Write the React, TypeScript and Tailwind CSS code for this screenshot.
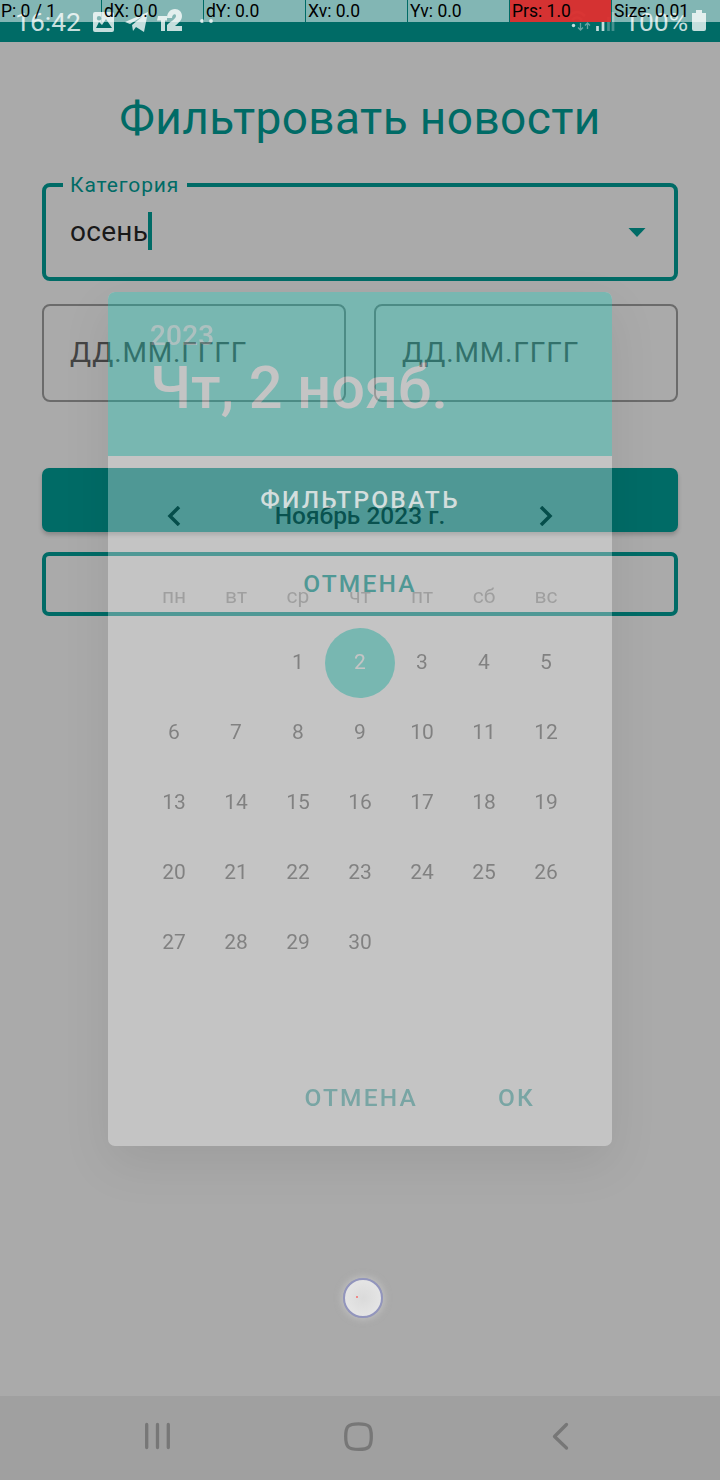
const WEEKDAYS = ['пн', 'вт', 'ср', 'чт', 'пт', 'сб', 'вс'];
const DAYS: (number | null)[] = [null, null, ...Array.from({ length: 30 }, (_, i) => i + 1)];

function PointerCell({ text, className }: { text: string; className: string }) {
  return (
    <div className={`h-[22px] shrink-0 overflow-hidden whitespace-nowrap pl-[2px] text-[17.5px] leading-[22px] text-black ${className}`}>
      {text}
    </div>
  );
}

function PointerBar() {
  return (
    <div className="absolute inset-x-0 top-0 z-30 flex gap-px">
      <PointerCell text="P: 0 / 1" className="w-[101px] bg-white/51 pl-px" />
      <PointerCell text="dX: 0.0" className="w-[101px] bg-white/51" />
      <PointerCell text="dY: 0.0" className="w-[101px] bg-white/51" />
      <PointerCell text="Xv: 0.0" className="w-[101px] bg-white/51" />
      <PointerCell text="Yv: 0.0" className="w-[101px] bg-white/51" />
      <PointerCell text="Prs: 1.0" className="w-[101px] bg-[#e22f2f]/94" />
      <PointerCell text="Size: 0.01" className="w-[108px] bg-white/51" />
    </div>
  );
}

function StatusBar() {
  return (
    <header className="flex h-[42px] shrink-0 items-start justify-between bg-[#006b66] text-[#c5dedd]">
      <div className="flex pl-[15px] pt-[6px]">
        <span className="w-[77px] text-[26.5px] leading-[32px]">16:42</span>
        <svg className="h-[28px] w-[126px]" viewBox="92 6 126 28" fill="currentColor">
          <path fillRule="evenodd" d="M95 12h17a2 2 0 0 1 2 2v16a2 2 0 0 1-2 2H95a2 2 0 0 1-2-2V14a2 2 0 0 1 2-2Zm1 16h16l-6-9-4 6-3-3Zm3-12a2.2 2.2 0 1 0 0 4.400 2.200 2.200 0 0 0 0-4.400Z" />
          <path d="m125 22 23-10-4 20-8-5-3 4-1-6 11-9-13 8Z" />
          <path d="M158 16h9v4.500h-2V31h-4V20.500h-4Z" />
          <path d="M167 18c0-5 3-9 8-9 4 0 7 3 7 7 0 5-4 7-7 10h7v5h-15v-6c4-4 9-6 9-9 0-3-4-2-4 2Z" />
          <circle cx="202" cy="21" r="1.900" />
          <circle cx="211" cy="21" r="1.900" />
        </svg>
      </div>
      <div className="flex pt-[6px]">
        <svg className="h-[28px] w-[58px]" viewBox="566 6 58 28" fill="none" stroke="currentColor">
          <g strokeWidth="2.500" opacity=".35">
            <path d="M569 16q8-8 16 0" />
            <path d="M572 20q5-5 10 0" />
          </g>
          <circle cx="573.500" cy="25.500" r="1.700" fill="currentColor" stroke="none" />
          <g strokeWidth="1.300" opacity=".5">
            <path d="M580.500 23v7m-2.500-2.500 2.500 2.500 2.500-2.500M587.500 29v-6m-2.500 2.500 2.500-2.500 2.500 2.500" />
          </g>
          <path strokeWidth="2.700" d="M597.500 31v-5M603 31v-9" />
          <path strokeWidth="2.700" opacity=".35" d="M608.500 31V17M613 31V12" />
        </svg>
        <span className="w-[68px] text-[26.5px] leading-[32px]">100%</span>
        <svg className="h-[28px] w-[28px]" viewBox="692 6 28 28" fill="currentColor">
          <path d="M696 10h6v3h4v16q0 2-2 2h-10q-2 0-2-2V13h4Z" />
        </svg>
      </div>
    </header>
  );
}

function DateField() {
  return (
    <div className="flex h-[98px] flex-1 items-center rounded-[8px] border-2 border-[#6b6b6b] pl-[26px] text-[28px] tracking-[0.875px] text-[#444]">
      ДД.ММ.ГГГГ
    </div>
  );
}

function FilterForm() {
  return (
    <main className="flex h-[1354px] shrink-0 flex-col px-[42px]">
      <h1 className="mt-[48px] text-center text-[46px] leading-[56px] tracking-[0.4px] whitespace-nowrap text-[#006b66]">Фильтровать новости</h1>
      <div className="relative mt-[37px] flex h-[98px] shrink-0 items-center justify-between rounded-[8px] border-4 border-[#006b66] pr-[28px] pl-[24px]">
        <span className="absolute -top-[14px] left-[17px] bg-[#aaa] pr-[8px] pl-[7px] text-[21px] leading-[25px] tracking-[0.9px] text-[#006b66]">Категория</span>
        <span className="flex items-center text-[28px] tracking-[0.3px] text-[#191919]">
          осень
          <span className="-mt-[3px] h-[38px] w-[4px] bg-[#006b66]" />
        </span>
        <svg className="h-[9px] w-[18px]" viewBox="0 0 18 9"><path d="M.5 0h17L9 9Z" fill="#006b66" /></svg>
      </div>
      <div className="mt-[23px] flex gap-[28px]">
        <DateField />
        <DateField />
      </div>
      <button className="mt-[66px] h-[64px] shrink-0 rounded-[7px] bg-[#006b66] text-[24.5px] font-medium tracking-[2.19px] text-[#c0cfce] shadow-[0_3px_4px_rgba(0,0,0,0.2)]">ФИЛЬТРОВАТЬ</button>
      <button className="mt-[20px] h-[64px] shrink-0 rounded-[7px] border-4 border-[#006b66] text-[24.5px] font-medium tracking-[2.19px] text-[#006b66]">ОТМЕНА</button>
    </main>
  );
}

function DatePicker() {
  return (
    <section className="absolute top-[292px] left-[108px] z-10 flex h-[854px] w-[504px] flex-col overflow-hidden rounded-[7px] bg-white opacity-[0.31]">
      <div className="flex h-[164px] shrink-0 flex-col bg-[#0ad5c3] pt-[27px] pl-[42px] font-medium text-white">
        <span className="text-[28px] leading-[34px] tracking-[0.2px] opacity-70">2023</span>
        <span className="text-[59.5px] leading-[70px] whitespace-nowrap">Чт, 2 нояб.</span>
      </div>
      <div className="mt-[25px] flex h-[70px] shrink-0 items-center justify-between px-[59px]">
        <svg className="h-[20px] w-[14px]" viewBox="0 0 14 20" fill="none" stroke="#111" strokeWidth="3.500"><path d="m12 1-9 9 9 9" /></svg>
        <span className="text-[24.5px] font-medium text-black/90">Ноябрь 2023 г.</span>
        <svg className="h-[20px] w-[14px]" viewBox="0 0 14 20" fill="none" stroke="#111" strokeWidth="3.500"><path d="m2 1 9 9-9 9" /></svg>
      </div>
      <div className="mt-[19px] grid shrink-0 grid-cols-7 px-[35px] text-center text-[21px] leading-[52px] text-[#898989]">
        {WEEKDAYS.map((day) => <span key={day}>{day}</span>)}
      </div>
      <div className="mt-[6px] grid shrink-0 grid-cols-7 px-[35px] text-[21px] text-[#292929]">
        {DAYS.map((day, i) => (
          <div key={i} className="flex h-[70px] items-center justify-center">
            {day === 2 ? (
              <span className="flex size-[70px] shrink-0 items-center justify-center rounded-full bg-[#0ad5c3] text-white">{day}</span>
            ) : day}
          </div>
        ))}
      </div>
      <div className="mt-auto flex h-[97px] shrink-0 items-start justify-end gap-[80px] pt-[34px] pr-[77px] text-[24.5px] leading-[30px] font-medium tracking-[2.19px] text-[#0e9c97]">
        <button>ОТМЕНА</button>
        <button>ОК</button>
      </div>
    </section>
  );
}

function NavigationBar() {
  return (
    <nav className="h-[84px] shrink-0 bg-[#a0a0a0]">
      <svg className="h-[84px] w-[720px]" viewBox="0 0 720 84" fill="none" stroke="#777" strokeWidth="3.300" strokeLinecap="round" strokeLinejoin="round">
        <path d="M146.700 28.500v23M157.500 28.500v23M168.300 28.500v23" />
        <path d="M358.500 27.800C369 27.800 371.300 30 371.300 40.600S369 53.400 358.500 53.400 345.700 51 345.700 40.600 348 27.800 358.500 27.800Z" />
        <path d="m566.500 28.500-12 12 12 11.500" />
      </svg>
    </nav>
  );
}

export default function App() {
  return (
    <div className="relative flex h-[1480px] w-[720px] flex-col overflow-hidden bg-[#aaa] font-['Roboto',sans-serif]">
      <StatusBar />
      <FilterForm />
      <NavigationBar />
      <PointerBar />
      <div className="absolute top-[292px] left-[108px] h-[854px] w-[504px] rounded-[7px] shadow-[0_18px_50px_rgba(0,0,0,0.08)]" />
      <DatePicker />
      <div className="absolute top-[1278px] left-[343px] z-20 size-[40px] rounded-full border-2 border-[#9295bd] bg-[radial-gradient(circle,#dadada,#e9e9e9)] shadow-[0_0_6px_2px_rgba(210,210,210,0.5)]">
        <span className="absolute top-[16px] left-[11px] size-[2px] bg-[#ef8989]" />
      </div>
    </div>
  );
}
